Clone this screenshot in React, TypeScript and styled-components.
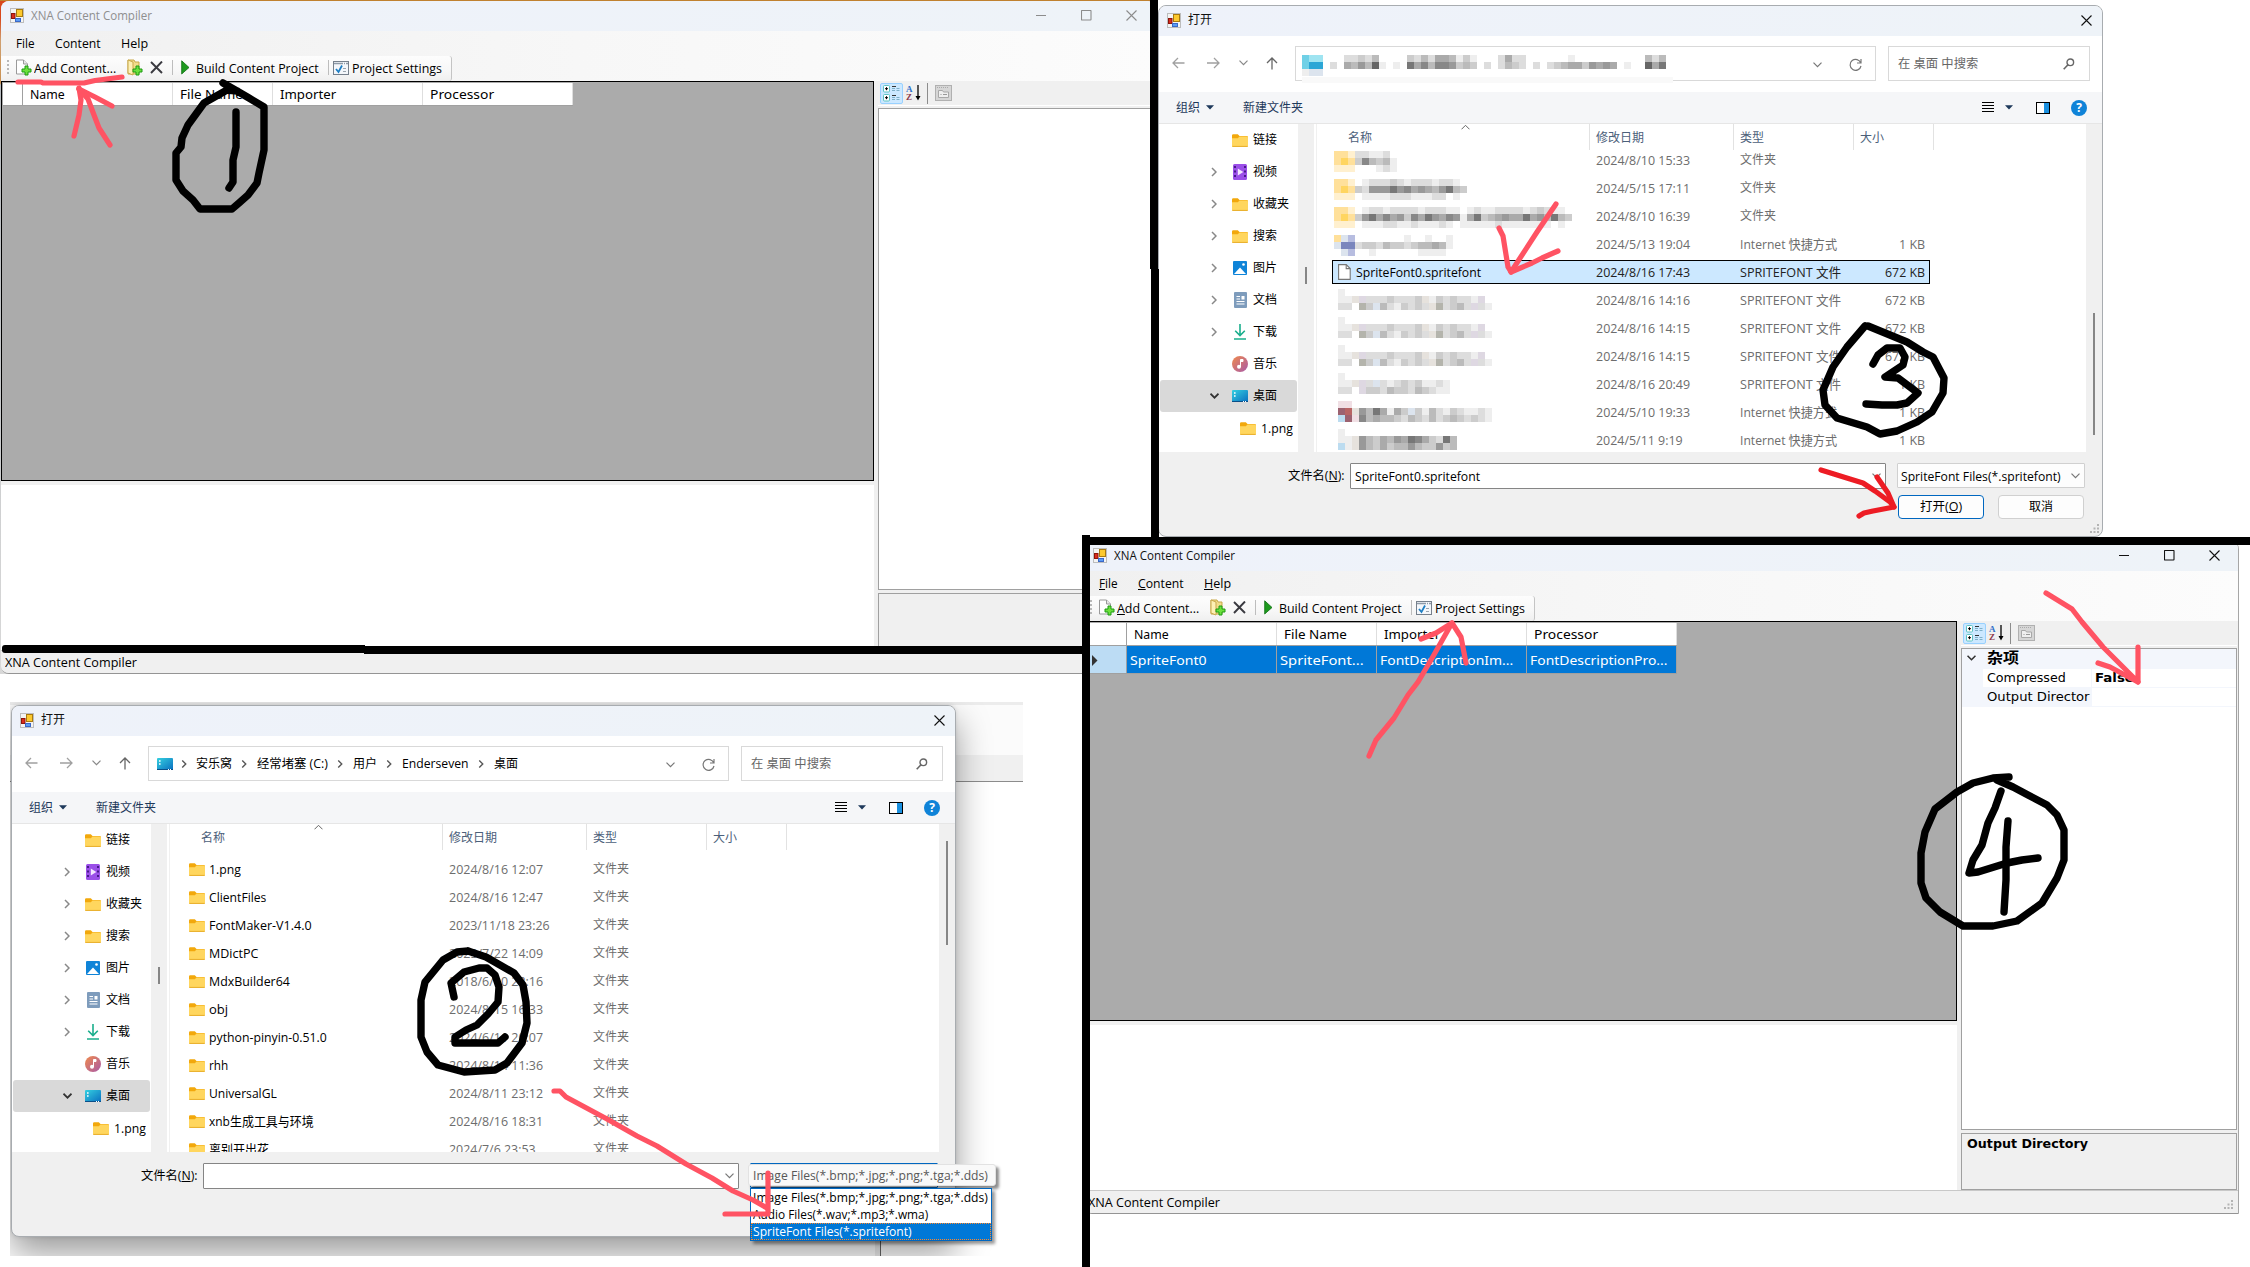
import React, { useLayoutEffect, useRef, useState } from "react";
import styled, { createGlobalStyle, css } from "styled-components";

const UI = `"Open Sans", "Noto Sans CJK SC", sans-serif`;
const GRID = `"Noto Sans", "Noto Sans CJK SC", sans-serif`;
const WIDE = `"DejaVu Sans", "Noto Sans CJK SC", sans-serif`;

const GlobalStyle = createGlobalStyle`
  body { margin: 0; background: #fff; font-family: ${UI}; font-size: 13px; line-height: 1; color: #000; }
  * { box-sizing: border-box; }
  svg { display: block; flex: none; }
`;

const Desktop = styled.div`
  position: relative;
  width: 2250px;
  height: 1267px;
  overflow: hidden;
  background: #fff;
`;

/* ---------- text ---------- */

const FitBox = styled.span<{ $w?: number; $size?: number; $color?: string; $bold?: boolean; $ml?: number; $font?: string }>`
  display: inline-block;
  flex: none;
  width: ${(p) => (p.$w ? `${p.$w}px` : "auto")};
  margin-left: ${(p) => p.$ml ?? 0}px;
  font-size: ${(p) => p.$size ?? 13}px;
  font-family: ${(p) => p.$font ?? "inherit"};
  font-weight: ${(p) => (p.$bold ? 700 : 400)};
  color: ${(p) => p.$color ?? "inherit"};
  line-height: 18px;
  white-space: nowrap;
`;
const FitInner = styled.span`
  display: inline-block;
  transform-origin: 0 50%;
  white-space: pre;
`;

type TextProps = { w?: number; size?: number; color?: string; bold?: boolean; ml?: number; font?: string; children: React.ReactNode };

function Text({ w, size, color, bold, ml, font, children }: TextProps) {
  const ref = useRef<HTMLSpanElement>(null);
  const [scale, setScale] = useState(1);
  useLayoutEffect(() => {
    if (w && ref.current) setScale(w / ref.current.offsetWidth);
  }, [w]);
  return (
    <FitBox $w={w} $size={size} $color={color} $bold={bold} $ml={ml} $font={font}>
      <FitInner ref={ref} style={{ transform: `scaleX(${scale})` }}>{children}</FitInner>
    </FitBox>
  );
}

const Key = ({ on = true, children }: { on?: boolean; children: React.ReactNode }) => (on ? <u>{children}</u> : <>{children}</>);

const Spot = styled.span<{ $ml?: number; $mt?: number }>`
  display: inline-flex;
  flex: none;
  margin-left: ${(p) => p.$ml ?? 0}px;
  margin-top: ${(p) => p.$mt ?? 0}px;
`;

/* ---------- icons ---------- */

const AppIcon = () => (
  <svg width="14" height="15" viewBox="0 0 14 15">
    <rect x=".5" y=".5" width="13" height="14" fill="#f4f4f4" stroke="#bdbdbd" />
    <rect x="6.5" y="1.5" width="6" height="7" fill="#fcc92f" stroke="#a87a10" />
    <rect x="1.5" y="5.5" width="3.5" height="5" fill="#d92b1c" stroke="#8c150c" />
    <rect x="5.5" y="10.5" width="5" height="3" fill="#5b9cf5" stroke="#3a68c8" />
  </svg>
);
const Plus = ({ x, y }: { x: number; y: number }) => (
  <path transform={`translate(${x} ${y})`} d="M3 0h3v3h3v3H6v3H3V6H0V3h3z" fill="#6be03c" stroke="#1c9a12" strokeWidth="1" />
);
const AddDocIcon = () => (
  <svg width="17" height="17" viewBox="0 0 17 17">
    <path d="M1.5 1h7l4 4v10h-11z" fill="#fff" stroke="#9a9a9a" />
    <path d="M8.500 1v4h4" fill="#e8e8e8" stroke="#9a9a9a" />
    <Plus x={7} y={7} />
  </svg>
);
const AddFolderIcon = () => (
  <svg width="16" height="17" viewBox="0 0 16 17">
    <path d="M1 1h6l1 2h4v12H1z" fill="#f2dc8a" stroke="#c8a84a" />
    <path d="M1 1l5 2v13l-5-2z" fill="#fdf0b4" stroke="#c8a84a" />
    <Plus x={6} y={7} />
  </svg>
);
const DeleteIcon = () => (
  <svg width="13" height="13" viewBox="0 0 13 13">
    <path d="M1 1l11 11M12 .5L1 12" stroke="#3a3a40" strokeWidth="1.900" fill="none" />
  </svg>
);
const PlayIcon = () => (
  <svg width="9" height="15" viewBox="0 0 9 15">
    <path d="M.7.8L8 7.500.7 14z" fill="#1e9a1e" stroke="#0c6e10" strokeWidth=".8" />
  </svg>
);
const SettingsIcon = () => (
  <svg width="16" height="14" viewBox="0 0 16 14">
    <rect x=".5" y=".5" width="15" height="13" fill="#f4f7fb" stroke="#76808c" />
    <path d="M1 2.500h14" stroke="#8e9aa8" strokeWidth="1.500" strokeDasharray="9 1 1 1" />
    <path d="M3 8l2.500 3L9 4.500" stroke="#1f7fc4" strokeWidth="1.800" fill="none" />
    <path d="M10 7.500h3M10 10.500h3" stroke="#9aa4ae" />
  </svg>
);
const CategoryIcon = () => (
  <svg width="18" height="17" viewBox="0 0 18 17">
    {[0.5, 9.5].map((y) => (
      <g key={y}>
        <rect x=".5" y={y} width="6" height="6.500" rx="1" fill="#fff" stroke="#5cc3c3" />
        <path d={`M2 ${y + 3.2}h3M3.500 ${y + 1.700}v3`} stroke="#000" />
        <path d={`M9 ${y + 1}h4`} stroke="#333" />
        <path d={`M9 ${y + 3}h3M13.500 ${y + 3}h3M9 ${y + 5}h3M13.500 ${y + 5}h3`} stroke="#7fb0c8" />
      </g>
    ))}
  </svg>
);
const SortIconBox = styled.span`
  display: flex;
  margin-left: 3px;
`;
const SortLetters = styled.span`
  display: flex;
  flex-direction: column;
  width: 8px;
  font: 700 9px/8px "Liberation Serif", serif;
  span:first-child { color: #2f6fc8; }
  span:last-child { color: #8c3a4a; }
`;
const SortIcon = () => (
  <SortIconBox>
    <SortLetters><span>A</span><span>Z</span></SortLetters>
    <svg width="7" height="16" viewBox="0 0 7 16">
      <path d="M4 0v12" stroke="#000" strokeWidth="1.300" />
      <path d="M1.500 11h5L4 15.500z" fill="#000" />
    </svg>
  </SortIconBox>
);
const PagesIcon = () => (
  <svg width="17" height="16" viewBox="0 0 17 16">
    <rect x=".5" y=".5" width="16" height="15" fill="#d6d6d6" stroke="#b0b0b0" />
    <path d="M2 2.500h12" stroke="#aaa" strokeDasharray="1 1" />
    <path d="M3.500 12.500v-7h4l1 1.500h5v5.500z" fill="#efefef" stroke="#a8a8a8" />
    <path d="M5.500 9.500h1M8 9.500h4" stroke="#999" />
  </svg>
);
const MinIcon = ({ c }: { c: string }) => (
  <svg width="11" height="11" viewBox="0 0 11 11"><path d="M0 5.500h10" stroke={c} /></svg>
);
const MaxIcon = ({ c }: { c: string }) => (
  <svg width="11" height="11" viewBox="0 0 11 11"><rect x=".5" y=".5" width="9.500" height="9.500" rx=".5" fill="none" stroke={c} strokeWidth="1.100" /></svg>
);
const CloseIcon = ({ c }: { c: string }) => (
  <svg width="11" height="11" viewBox="0 0 11 11"><path d="M.5.5l10 10M10.500.5l-10 10" stroke={c} strokeWidth="1.100" /></svg>
);
const BackIcon = () => (
  <svg width="13" height="12" viewBox="0 0 13 12"><path d="M12.500 6H1M6 1L1 6l5 5" fill="none" stroke="#a0a0a0" strokeWidth="1.300" /></svg>
);
const ForwardIcon = () => (
  <svg width="13" height="12" viewBox="0 0 13 12"><path d="M0 6h11.500M7 1l5 5-5 5" fill="none" stroke="#a0a0a0" strokeWidth="1.300" /></svg>
);
const UpIcon = () => (
  <svg width="12" height="13" viewBox="0 0 12 13"><path d="M6 12.500V1M1 6l5-5 5 5" fill="none" stroke="#666" strokeWidth="1.300" /></svg>
);
const Chevron = ({ c = "#888", w = 9, s = 1.2 }: { c?: string; w?: number; s?: number }) => (
  <svg width={w} height="6" viewBox="0 0 9 6"><path d="M.5.7l4 4 4-4" fill="none" stroke={c} strokeWidth={s} /></svg>
);
const ChevronRight = ({ c = "#888", h = 9, s = 1.5 }: { c?: string; h?: number; s?: number }) => (
  <svg width="6" height={h} viewBox="0 0 6 9"><path d="M1 .5l4 4-4 4" fill="none" stroke={c} strokeWidth={s} /></svg>
);
const RefreshIcon = () => (
  <svg width="13" height="14" viewBox="0 0 13 14"><path d="M11.800 5A5.500 5.500 0 1 0 12 8M12 1v4H8" fill="none" stroke="#777" strokeWidth="1.200" /></svg>
);
const SearchIcon = () => (
  <svg width="12" height="12" viewBox="0 0 12 12"><circle cx="7.300" cy="4.300" r="3.300" fill="none" stroke="#666" strokeWidth="1.400" /><path d="M5 6.800L.7 11.300" stroke="#666" strokeWidth="1.600" /></svg>
);
const DownTri = () => (
  <svg width="8" height="5" viewBox="0 0 8 5"><path d="M0 .3h8L4 4.600z" fill="#1e395b" /></svg>
);
const ListIcon = () => (
  <svg width="13" height="11" viewBox="0 0 13 11"><path d="M0 .5h12M0 3.500h12M0 6.500h12M0 9.500h12" stroke="#000" /></svg>
);
const PaneIcon = () => (
  <svg width="14" height="12" viewBox="0 0 14 12"><rect x=".5" y=".5" width="13" height="11" fill="#fff" stroke="#000" /><rect x="8" y="1" width="5" height="10" fill="#1a90e0" /></svg>
);
const HelpCircle = styled.span`
  display: flex;
  align-items: center;
  justify-content: center;
  width: 16px;
  height: 16px;
  margin-left: 21px;
  border-radius: 50%;
  background: #0f83d8;
  color: #fff;
  font: 700 12px/16px "Open Sans", sans-serif;
`;
const FolderIcon = () => (
  <svg width="16" height="13" viewBox="0 0 16 13">
    <path d="M0 1.500A1.300 1.300 0 0 1 1.300.2h4.500L7.500 2H14.700A1.300 1.300 0 0 1 16 3.300V6H0z" fill="#f2a80c" />
    <path d="M0 4.300h5.800L7.500 2.500h7.300A1.200 1.200 0 0 1 16 3.700v8A1.200 1.200 0 0 1 14.800 13H1.200A1.200 1.200 0 0 1 0 11.700z" fill="#ffd65e" />
    <path d="M.3 12.400h15.400" stroke="#e8ae2c" strokeWidth="1" />
  </svg>
);
const VideoIcon = () => (
  <svg width="14" height="16" viewBox="0 0 14 16">
    <rect width="14" height="16" rx="1.500" fill="#9b4fe8" />
    <path d="M2 2v12M12 2v12" stroke="#3e1580" strokeWidth="1.800" strokeDasharray="2 2.500" />
    <path d="M4.800 4.500l5.500 3.500-5.500 3.500z" fill="#f4e6ff" />
  </svg>
);
const PictureIcon = () => (
  <svg width="14" height="14" viewBox="0 0 14 14"><rect width="14" height="14" rx="1" fill="#0f84d8" /><path d="M1 13l6-6.500L13 13z" fill="#fff" /><circle cx="10.500" cy="3.500" r="1.300" fill="#fff" /></svg>
);
const DocIcon = () => (
  <svg width="13" height="16" viewBox="0 0 13 16"><rect width="13" height="16" rx="1" fill="#7e9cbc" /><path d="M2.500 4.500h3.500M2.500 7h3.500M2.500 9.500h8M2.500 12h8" stroke="#fff" strokeWidth="1.200" /><rect x="7.500" y="4" width="3" height="3.500" fill="#fff" /></svg>
);
const DownloadIcon = () => (
  <svg width="12" height="16" viewBox="0 0 12 16"><path d="M6 0v11M1.200 6.700L6 11.500l4.800-4.800M0 15h12" fill="none" stroke="#1aae8c" strokeWidth="1.600" /></svg>
);
const MusicIcon = () => (
  <svg width="16" height="16" viewBox="0 0 16 16">
    <defs><linearGradient id="mus" x1="0" y1="0" x2="1" y2="1"><stop offset="0" stopColor="#f08a4c" /><stop offset="1" stopColor="#a85aa8" /></linearGradient></defs>
    <circle cx="8" cy="8" r="8" fill="url(#mus)" /><circle cx="7" cy="10.800" r="2" fill="#fff" /><path d="M8.500 11V3.500h2.500v2H8.500" fill="#fff" stroke="#fff" strokeWidth="1" />
  </svg>
);
const DesktopIcon = () => (
  <svg width="16" height="12" viewBox="0 0 16 12">
    <defs><linearGradient id="desk" x1="0" y1="0" x2="1" y2="1"><stop offset="0" stopColor="#35d0e0" /><stop offset="1" stopColor="#0a6fc0" /></linearGradient></defs>
    <rect width="16" height="12" rx="1" fill="url(#desk)" /><path d="M2 3h1.600M2 6h1.600" stroke="#fff" strokeWidth="1.600" /><path d="M0 11.500h16" stroke="#0b4f88" /><path d="M11 11.500h4" stroke="#fff" strokeDasharray="1 1" />
  </svg>
);
const FileIcon = () => (
  <svg width="13" height="16" viewBox="0 0 13 16"><path d="M.6.600h7.600l4 4v10.800H.6z" fill="#fff" stroke="#777" strokeWidth="1.100" /><path d="M8.200.6v4h4" fill="none" stroke="#777" strokeWidth="1.100" /></svg>
);
const Grip = () => (
  <svg width="10" height="10" viewBox="0 0 10 10">
    {[[7, 0], [3.5, 3.5], [7, 3.5], [0, 7], [3.5, 7], [7, 7]].map(([x, y]) => <rect key={`${x}-${y}`} x={x} y={y} width="2" height="2" fill="#b4b4b4" />)}
  </svg>
);

/* ---------- pixelated names ---------- */

const TONES: Record<string, string> = {
  Y: "#ffe09a", Z: "#ffd560", y: "#fff0cf", P: "#7a86bd", p: "#b7bde0", C: "#9fe4f1", D: "#2ba6d6", E: "#6fd0e6",
  R: "#9c6270", S: "#b86464", s: "#f0dfe4", L: "#bcdcf0", l: "#dce4ee", w: "#e6e2dd", v: "#ded8e2", g: "#b4b4ac",
};
const MosaicGrid = styled.span<{ $cols: number; $mt?: number }>`
  display: grid;
  grid-template-columns: repeat(${(p) => p.$cols}, 7px);
  grid-auto-rows: 7px;
  margin-top: ${(p) => p.$mt ?? 0}px;
`;
const Cell = styled.i<{ $tone: string }>`
  background: ${(p) => p.$tone};
`;
const Mosaic = ({ rows, mt }: { rows: string[]; mt?: number }) => {
  const cols = Math.max(...rows.map((r) => r.length));
  return (
    <MosaicGrid $cols={cols} $mt={mt}>
      {rows.flatMap((r, y) =>
        r.padEnd(cols, ".").split("").map((ch, x) => (
          <Cell key={`${y}-${x}`} $tone={ch === "." ? "transparent" : TONES[ch] ?? `#${ch.repeat(6)}`} />
        ))
      )}
    </MosaicGrid>
  );
};

/* ---------- compiler window ---------- */

const Win = styled.section<{ $x: number; $y: number }>`
  position: absolute;
  left: ${(p) => p.$x}px;
  top: ${(p) => p.$y}px;
  width: 1155px;
  height: 673px;
  display: flex;
  flex-direction: column;
  overflow: hidden;
  background: #f0f0f0;
  border-right: 1px solid #a6a6a6;
  border-bottom: 1px solid #949494;
  border-radius: 8px 8px 0 8px;
`;
const TitleBar = styled.header<{ $color?: string }>`
  display: flex;
  align-items: center;
  flex: none;
  height: 30px;
  padding: 0 0 2px 8px;
  background: linear-gradient(90deg, #eef2fa, #eef3f8);
  color: ${(p) => p.$color ?? "#111"};
`;
const Controls = styled.div<{ $right: number }>`
  display: flex;
  gap: 34px;
  margin-left: auto;
  margin-right: ${(p) => p.$right}px;
`;
const Bars = styled.div`
  flex: none;
  background: linear-gradient(90deg, #f0f0f0, #f7f7f7 50%, #fcfcfc);
`;
const MenuBar = styled.nav`
  display: flex;
  align-items: center;
  height: 25px;
  padding: 0 0 1px 15px;
  gap: 20px;
`;
const ToolStrip = styled.div`
  display: flex;
  align-items: center;
  width: 451px;
  height: 25px;
  padding: 0 0 2px 6px;
  background: linear-gradient(#fdfdfd, #f7f7f7 60%, #efefef);
  border-right: 1px solid #c4c4c4;
  border-radius: 0 3px 3px 0;
`;
const Dots = styled.i`
  width: 2px;
  height: 16px;
  background: repeating-linear-gradient(#b8b8b8 0 2px, transparent 2px 4px);
`;
const Rule = styled.i<{ $ml: number; $h?: number; $c?: string }>`
  width: 1px;
  height: ${(p) => p.$h ?? 15}px;
  margin-left: ${(p) => p.$ml}px;
  background: ${(p) => p.$c ?? "#bdbdbd"};
`;
const Body = styled.main`
  display: grid;
  grid-template-columns: 873px 276px;
  column-gap: 4px;
  height: 569px;
`;
const LeftPane = styled.div`
  display: grid;
  grid-template-rows: 400px 1fr;
  row-gap: 4px;
`;
const DataGrid = styled.div`
  background: #ababab;
  border: 1px solid #000;
  padding: 1px 0 0 1px;
`;
const HeaderRow = styled.div<{ $lead: number }>`
  display: grid;
  grid-template-columns: ${(p) => p.$lead}px 150px 100px 150px 150px;
  width: max-content;
  height: 23px;
  background: #fff;
  border-bottom: 1px solid #a0a0a0;
`;
const HeadCell = styled.div<{ $lead?: boolean }>`
  display: flex;
  align-items: center;
  padding-left: 7px;
  border-right: 1px solid ${(p) => (p.$lead ? "#a0a0a0" : "#dedede")};
`;
const DataRow = styled(HeaderRow)`
  height: 28px;
  background: #0078d7;
  color: #fff;
`;
const DataCell = styled.div<{ $lead?: boolean }>`
  display: flex;
  align-items: center;
  padding: 1px 0 0 ${(p) => (p.$lead ? 6 : 3)}px;
  background: ${(p) => (p.$lead ? "#bcdcf4" : "transparent")};
  border-right: 1px solid #a0a0a0;
`;
const Output = styled.div`
  background: #fff;
`;
const PropPane = styled.aside`
  display: grid;
  grid-template-rows: 25px 482px 58px;
  row-gap: 2px;
`;
const PropTools = styled.div`
  display: flex;
  align-items: center;
  border-bottom: 1px solid #fff;
  padding-left: 2px;
`;
const ActiveTool = styled.span`
  display: flex;
  align-items: center;
  justify-content: center;
  width: 23px;
  height: 21px;
  background: #cce8ff;
  border: 1px solid #99d1ff;
  border-radius: 2px;
`;
const PropGrid = styled.div`
  background: #fff;
  border: 1px solid #a0a0a0;
  font-family: ${WIDE};
`;
const PropHead = styled.div`
  display: flex;
  align-items: center;
  height: 20px;
  padding: 0 0 3px 5px;
  background: #f3f6fc;
`;
const PropRow = styled.div`
  display: grid;
  grid-template-columns: 21px 108px 1fr;
  height: 19px;
  background: #f3f6fc;
`;
const PropName = styled.div<{ $plain?: boolean }>`
  display: flex;
  align-items: center;
  padding-left: 4px;
  background: ${(p) => (p.$plain ? "#fff" : "#f3f6fc")};
  border-bottom: 1px solid #f3f6fc;
`;
const PropValue = styled.div`
  display: flex;
  align-items: center;
  padding-left: 3px;
  background: #fff;
  border-left: 1px solid #f3f6fc;
  border-bottom: 1px solid #f3f6fc;
`;
const PropHelp = styled.div`
  padding: 1px 0 0 5px;
  margin-top: 1px;
  border: 1px solid #a0a0a0;
  font-family: ${WIDE};
`;
const StatusBar = styled.footer`
  display: flex;
  align-items: center;
  justify-content: space-between;
  flex: 1;
  padding: 0 4px 0;
  border-top: 1px solid #c8c8c8;
  background: #f0f0f0;
`;

type XnaProps = { x: number; y: number; active: boolean; row?: { w: number; t: string }[] };

const HEADS = [{ t: "Name", w: 35 }, { t: "File Name", w: 63 }, { t: "Importer", w: 56 }, { t: "Processor", w: 64 }];

function XnaWindow({ x, y, active, row }: XnaProps) {
  const c = active ? "#111" : "#8c8c8c";
  const lead = row ? 41 : 20;
  return (
    <Win $x={x} $y={y}>
      <TitleBar $color={active ? "#111" : "#8f8f8f"}>
        <Spot $ml={1}><AppIcon /></Spot>
        <Text w={121} ml={7}>XNA Content Compiler</Text>
        <Controls $right={18}><MinIcon c={c} /><MaxIcon c={c} /><CloseIcon c={c} /></Controls>
      </TitleBar>
      <Bars>
        <MenuBar>
          <Text w={19}><Key on={active}>F</Key>ile</Text>
          <Text w={46}><Key on={active}>C</Key>ontent</Text>
          <Text w={27}><Key on={active}>H</Key>elp</Text>
        </MenuBar>
        <ToolStrip>
          <Dots />
          <Spot $ml={6}><AddDocIcon /></Spot>
          <Text w={82} ml={2}><Key on={active}>A</Key>dd Content...</Text>
          <Spot $ml={11}><AddFolderIcon /></Spot>
          <Spot $ml={7}><DeleteIcon /></Spot>
          <Rule $ml={9} />
          <Spot $ml={8}><PlayIcon /></Spot>
          <Text w={123} ml={6}>Build Content Project</Text>
          <Rule $ml={9} />
          <Spot $ml={4}><SettingsIcon /></Spot>
          <Text w={90} ml={3}>Project Settings</Text>
        </ToolStrip>
      </Bars>
      <Body>
        <LeftPane>
          <DataGrid>
            <HeaderRow $lead={lead}>
              <HeadCell $lead />
              {HEADS.map((h) => <HeadCell key={h.t}><Text w={h.w} font={GRID}>{h.t}</Text></HeadCell>)}
            </HeaderRow>
            {row && (
              <DataRow $lead={lead}>
                <DataCell $lead><svg width="6" height="11" viewBox="0 0 6 11"><path d="M0 0l5.500 5.500L0 11z" fill="#333" /></svg></DataCell>
                {row.map((r) => <DataCell key={r.t}><Text w={r.w} font={GRID}>{r.t}</Text></DataCell>)}
              </DataRow>
            )}
          </DataGrid>
          <Output />
        </LeftPane>
        <PropPane>
          <PropTools>
            <ActiveTool><CategoryIcon /></ActiveTool>
            <SortIcon />
            <Rule $ml={6} $h={21} $c="#8c8c8c" />
            <Spot $ml={7}><PagesIcon /></Spot>
          </PropTools>
          <PropGrid>
            {row && (
              <>
                <PropHead><Chevron c="#333" s={1.6} /><Text size={14.5} bold ml={11} w={32}>杂项</Text></PropHead>
                <PropRow><i /><PropName $plain><Text w={79}>Compressed</Text></PropName><PropValue><Text w={39} bold>False</Text></PropValue></PropRow>
                <PropRow><i /><PropName><Text w={103}>Output Director</Text></PropName><PropValue /></PropRow>
              </>
            )}
          </PropGrid>
          <PropHelp>{row && <Text w={121} bold>Output Directory</Text>}</PropHelp>
        </PropPane>
      </Body>
      <StatusBar><Text w={132}>XNA Content Compiler</Text><Spot $mt={6}><Grip /></Spot></StatusBar>
    </Win>
  );
}

/* ---------- file dialog ---------- */

const Dialog = styled.section<{ $x: number; $y: number; $shadow?: boolean }>`
  position: absolute;
  left: ${(p) => p.$x}px;
  top: ${(p) => p.$y}px;
  width: 945px;
  height: 532px;
  display: flex;
  flex-direction: column;
  overflow: hidden;
  background: #f0f0f0;
  border: 1px solid #a8acb0;
  border-radius: 8px;
  ${(p) => p.$shadow && css`box-shadow: 0 16px 34px rgba(0, 0, 0, 0.4), 0 0 4px rgba(0, 0, 0, 0.12);`}
`;
const NavRow = styled.div`
  display: flex;
  align-items: flex-start;
  flex: none;
  height: 56px;
  padding: 10px 0 0 14px;
  background: #fff;
`;
const NavGlyphs = styled.div`
  display: grid;
  grid-template-columns: 35px 32px 27px 28px;
  align-items: center;
  height: 34px;
  margin-left: -1px;
  margin-right: 1px;
`;
const Field = styled.div<{ $w: number; $ml?: number }>`
  position: relative;
  display: flex;
  align-items: center;
  width: ${(p) => p.$w}px;
  height: 35px;
  margin-left: ${(p) => p.$ml ?? 0}px;
  border: 1px solid #d9d9d9;
  background: #fff;
`;
const Crumbs = styled.div`
  display: flex;
  align-items: center;
  width: 510px;
  padding-left: 8px;
`;
const Censor = styled.div`
  position: absolute;
  left: 6px;
  top: 8px;
  padding-bottom: 7px;
  background: linear-gradient(transparent 22px, #f9f9f9 22px);
`;
const CommandBar = styled.div`
  display: flex;
  align-items: center;
  flex: none;
  height: 32px;
  padding: 0 15px 0 17px;
  background: #f5f6f8;
  border-bottom: 1px solid #e6e6e6;
  color: #1e395b;
`;
const CommandRight = styled.div`
  display: flex;
  align-items: center;
  margin-left: auto;
`;
const Browse = styled.div`
  display: grid;
  grid-template-columns: 139px 16px 2px 1fr 16px;
  flex: none;
  height: 328px;
  background: #fff;
`;
const Side = styled.div`
  display: flex;
  flex-direction: column;
  overflow: hidden;
`;
const SideRow = styled.div<{ $on?: boolean; $child?: boolean }>`
  display: grid;
  grid-template-columns: ${(p) => (p.$child ? "80px 21px 1fr" : "72px 21px 1fr")};
  align-items: center;
  flex: none;
  height: 32px;
  margin: 0 1px;
  border-radius: 3px;
  background: ${(p) => (p.$on ? "#d9d9d9" : "transparent")};
`;
const Arrow = styled.span<{ $open?: boolean }>`
  padding-left: ${(p) => (p.$open ? 50 : 51)}px;
`;
const IconSlot = styled.span`
  display: flex;
  justify-content: center;
  width: 16px;
`;
const Track = styled.div`
  background: #f0f0f0;
`;
const Thumb = styled.i<{ $top: number; $h: number }>`
  display: block;
  width: 2px;
  height: ${(p) => p.$h}px;
  margin: ${(p) => p.$top}px 0 0 7px;
  background: #868686;
`;
const Files = styled.div`
  display: flex;
  flex-direction: column;
  overflow: hidden;
  border-left: 1px solid #f0f0f0;
`;
const ColumnHeads = styled.div`
  position: relative;
  display: grid;
  grid-template-columns: 272px 144px 120px 80px 1fr;
  flex: none;
  height: 26px;
  color: #4c607a;
`;
const ColHead = styled.div<{ $first?: boolean }>`
  display: flex;
  align-items: center;
  padding: 2px 0 0 ${(p) => (p.$first ? 31 : 6)}px;
  border-left: ${(p) => (p.$first ? 0 : 1)}px solid #e2e2e2;
`;
const SortMark = styled.span`
  position: absolute;
  left: 144px;
  top: 0;
  transform: rotate(180deg);
`;
const FileList = styled.div<{ $shift: number }>`
  margin-top: ${(p) => p.$shift}px;
`;
const FileRow = styled.div<{ $on?: boolean }>`
  display: grid;
  grid-template-columns: 272px 144px 120px 72px;
  align-items: center;
  height: 28px;
  color: #6d6d6d;
  ${(p) =>
    p.$on &&
    css`
      grid-template-columns: 256px 144px 120px 72px;
      width: 598px;
      height: 24px;
      margin: 2px 0 2px 15px;
      background: #cce8ff;
      border: 1px solid #000;
      color: #222;
    `}
`;
const NameCell = styled.div<{ $pad: number }>`
  display: flex;
  align-items: center;
  padding-left: ${(p) => p.$pad}px;
  color: #000;
`;
const DateCell = styled.div`
  padding-left: 7px;
`;
const SizeCell = styled.div`
  display: flex;
  justify-content: flex-end;
`;
const Footer = styled.div`
  display: grid;
  grid-template-columns: 57px 535px 188px;
  column-gap: 12px;
  align-items: start;
  padding: 11px 0 0 129px;
  height: 84px;
`;
const NameLabel = styled.label`
  padding-top: 4px;
`;
const NameInput = styled.div`
  display: flex;
  align-items: center;
  justify-content: space-between;
  width: 536px;
  height: 26px;
  margin-left: -7px;
  padding: 0 4px;
  background: #fff;
  border: 1px solid #858585;
  border-radius: 1px;
`;
const Choices = styled.div`
  display: grid;
  grid-template-columns: 87px 87px;
  column-gap: 13px;
  row-gap: 7px;
  margin-left: -7px;
`;
const TypeBox = styled.div<{ $open?: boolean }>`
  grid-column: 1 / 3;
  display: flex;
  align-items: center;
  justify-content: space-between;
  width: 188px;
  height: 25px;
  padding: 0 4px 0 3px;
  background: #fdfdfd;
  border: 1px solid ${(p) => (p.$open ? "#0067c0" : "#d0d0d0")};
  border-radius: 1px;
`;
const Button = styled.div<{ $main?: boolean }>`
  display: flex;
  align-items: center;
  justify-content: center;
  height: 24px;
  margin-left: 1px;
  background: #fdfdfd;
  border: ${(p) => (p.$main ? "1px solid #0067c0" : "1px solid #d0d0d0")};
  border-radius: 4px;
`;
const Corner = styled.div`
  position: absolute;
  right: 2px;
  bottom: 2px;
`;

const SIDE = [
  { t: "链接", w: 24, icon: <FolderIcon />, arrow: false },
  { t: "视频", w: 24, icon: <VideoIcon />, arrow: true },
  { t: "收藏夹", w: 36, icon: <FolderIcon />, arrow: true },
  { t: "搜索", w: 24, icon: <FolderIcon />, arrow: true },
  { t: "图片", w: 24, icon: <PictureIcon />, arrow: true },
  { t: "文档", w: 24, icon: <DocIcon />, arrow: true },
  { t: "下载", w: 24, icon: <DownloadIcon />, arrow: true },
  { t: "音乐", w: 24, icon: <MusicIcon />, arrow: false },
];

type FileItem = { name?: string; w?: number; mosaic?: string[]; pad?: number; lift?: number; date: string; dw: number; type: string; tw: number; size?: string; sw?: number; on?: boolean };
type DialogProps = { x: number; y: number; shadow?: boolean; shift: number; crumbs?: { t: string; w: number }[]; censored?: string[]; files: FileItem[]; thumb: [number, number]; value?: string; typeOpen?: boolean };

function FileDialog({ x, y, shadow, shift, crumbs, censored, files, thumb, value, typeOpen }: DialogProps) {
  return (
    <Dialog $x={x} $y={y} $shadow={shadow}>
      <TitleBar>
        <AppIcon />
        <Text size={12} ml={7}>打开</Text>
        <Controls $right={10}><CloseIcon c="#111" /></Controls>
      </TitleBar>
      <NavRow>
        <NavGlyphs><BackIcon /><ForwardIcon /><Chevron /><UpIcon /></NavGlyphs>
        <Field $w={581}>
          <Crumbs>
            {crumbs && <DesktopIcon />}
            {crumbs?.map((c, i) => (
              <React.Fragment key={c.t}>
                <Spot $ml={i ? 9 : 8}><ChevronRight c="#555" h={8} /></Spot>
                <Text size={12} w={c.w} ml={i ? 10 : 9}>{c.t}</Text>
              </React.Fragment>
            ))}
          </Crumbs>
          {censored && <Censor><Mosaic rows={censored} /></Censor>}
          <Spot $ml={7} $mt={2}><Chevron c="#777" /></Spot>
          <Spot $ml={27} $mt={2}><RefreshIcon /></Spot>
        </Field>
        <Field $w={202} $ml={12}>
          <Text size={12} w={80} ml={9} color="#666">在 桌面 中搜索</Text>
          <Spot $ml={85}><SearchIcon /></Spot>
        </Field>
      </NavRow>
      <CommandBar>
        <Text size={12}>组织</Text>
        <Spot $ml={6}><DownTri /></Spot>
        <Text size={12} ml={29}>新建文件夹</Text>
        <CommandRight>
          <ListIcon />
          <Spot $ml={10}><DownTri /></Spot>
          <Spot $ml={23}><PaneIcon /></Spot>
          <HelpCircle>?</HelpCircle>
        </CommandRight>
      </CommandBar>
      <Browse>
        <Side>
          {SIDE.map((s) => (
            <SideRow key={s.t}>
              <Arrow>{s.arrow && <ChevronRight h={10} />}</Arrow>
              <IconSlot>{s.icon}</IconSlot>
              <Text size={12} w={s.w}>{s.t}</Text>
            </SideRow>
          ))}
          <SideRow $on><Arrow $open><Chevron c="#333" s={1.7} /></Arrow><IconSlot><DesktopIcon /></IconSlot><Text size={12}>桌面</Text></SideRow>
          <SideRow $child><i /><FolderIcon /><Text w={32}>1.png</Text></SideRow>
        </Side>
        <Track><Thumb $top={143} $h={17} /></Track>
        <i />
        <Files>
          <ColumnHeads>
            <ColHead $first><Text size={12}>名称</Text></ColHead>
            <ColHead><Text size={12}>修改日期</Text></ColHead>
            <ColHead><Text size={12}>类型</Text></ColHead>
            <ColHead><Text size={12}>大小</Text></ColHead>
            <ColHead />
            <SortMark><Chevron c="#666" s={1} /></SortMark>
          </ColumnHeads>
          <FileList $shift={shift}>
            {files.map((f, i) => (
              <FileRow key={i} $on={f.on}>
                <NameCell $pad={f.mosaic ? f.pad ?? 17 : f.on ? 5 : 19}>
                  {f.mosaic ? <Mosaic rows={f.mosaic} mt={f.lift ?? 2} /> : f.on ? <FileIcon /> : <FolderIcon />}
                  {f.name && <Text w={f.w} ml={f.on ? 5 : 4}>{f.name}</Text>}
                </NameCell>
                <DateCell><Text w={f.dw}>{f.date}</Text></DateCell>
                <DateCell><Text w={f.tw} size={f.tw === 36 ? 12 : 13}>{f.type}</Text></DateCell>
                <SizeCell>{f.size && <Text w={f.sw}>{f.size}</Text>}</SizeCell>
              </FileRow>
            ))}
          </FileList>
        </Files>
        <Track><Thumb $top={thumb[0]} $h={thumb[1]} /></Track>
      </Browse>
      <Footer>
        <NameLabel><Text size={12.5} w={57}>文件名(<u>N</u>):</Text></NameLabel>
        <NameInput>{value ? <Text w={125}>{value}</Text> : <i />}<Chevron c="#777" /></NameInput>
        <Choices>
          {typeOpen ? (
            <TypeBox $open />
          ) : (
            <>
              <TypeBox><Text w={160}>SpriteFont Files(*.spritefont)</Text><Chevron c="#777" /></TypeBox>
              <Button $main><Text size={12.5} w={42}>打开(<u>O</u>)</Text></Button>
              <Button><Text size={12}>取消</Text></Button>
            </>
          )}
        </Choices>
      </Footer>
      <Corner><Grip /></Corner>
    </Dialog>
  );
}

const folder = (name: string, w: number, date: string, dw = 94): FileItem => ({ name, w, date, dw, type: "文件夹", tw: 36 });
const FILES_A: FileItem[] = [
  folder("1.png", 32, "2024/8/16 12:07"),
  folder("ClientFiles", 57, "2024/8/16 12:47"),
  folder("FontMaker-V1.4.0", 103, "2023/11/18 23:26", 101),
  folder("MDictPC", 49, "2023/7/22 14:09"),
  folder("MdxBuilder64", 81, "2018/6/10 22:16"),
  folder("obj", 19, "2024/8/15 16:33"),
  folder("python-pinyin-0.51.0", 118, "2024/6/11 20:07"),
  folder("rhh", 19, "2024/8/14 11:36"),
  folder("UniversalGL", 68, "2024/8/11 23:12"),
  folder("xnb生成工具与环境", 105, "2024/8/16 18:31"),
  folder("离别开出花", 60, "2024/7/6 23:53", 87),
];
const FONT_MOSAIC = [".ef", ".eewvdddcdddcwecdcddev", ".ddfgclbdecdcdwgdcbdvde"];
const LOW = { pad: 14, lift: -1 };
const sprite = (mosaic: string[], date: string, size = "672 KB", sw = 40): FileItem => ({ mosaic, date, dw: 94, type: "SPRITEFONT 文件", tw: 101, size, sw, ...LOW });
const link = (mosaic: string[], date: string, dw = 94): FileItem => ({ mosaic, date, dw, type: "Internet 快捷方式", tw: 97, size: "1 KB", sw: 26 });
const FILES_B: FileItem[] = [
  { mosaic: ["YYyddeedf", "YZYc8bcbe", "yyy...ede"], date: "2024/8/10 15:33", dw: 94, type: "文件夹", tw: 36 },
  { mosaic: ["YYyfedddcdedddedde", "YZYcd999798a9ab97bc", "yyyfeeeedddeeeddfef"], date: "2024/5/15 17:11", dw: 94, type: "文件夹", tw: 36 },
  { mosaic: ["YYyfeddeddddedddee.edeeddddedcdee", "YZYc97a8a9c8a79a89ea7cba9aa7a9b7bc", "yyyfeeeddeedeeedefeeeeedeeeeeeefef"], date: "2024/8/10 16:39", dw: 94, type: "文件夹", tw: 36 },
  link(["Ylpf......effef.e", "lPPdccdbccdcbbabe", ".lpf.effffffeeeef"], "2024/5/13 19:04"),
  { name: "SpriteFont0.spritefont", w: 125, date: "2024/8/16 17:43", dw: 94, type: "SPRITEFONT 文件", tw: 101, size: "672 KB", sw: 40, on: true },
  sprite(FONT_MOSAIC, "2024/8/16 14:16"),
  sprite(FONT_MOSAIC, "2024/8/16 14:15"),
  sprite(FONT_MOSAIC, "2024/8/16 14:15"),
  sprite([".ef", ".eewvdldedcdceede", ".ddfvccdbccdbcdee"], "2024/8/16 20:49", "1 KB", 26),
  { ...link([".ss", ".RSw9b7aeaclcebdecdeede", ".LRs8babbcdbcdbdcbcdcde"], "2024/5/10 19:33"), ...LOW },
  { ...link([".ef", ".eew9bcab9a78acd7b", ".Lew9bcacbb9bcc9cb"], "2024/5/11 9:19", 87), ...LOW },
];
const CENSORED = [
  "ECC...ddcdbf...cdbdaabece...dadd...f..e..........bdb.",
  "EDD.d.ab9b6efef7a8b889cbc.d.dbcd.d.dcbaac9a9a.e..6a7.",
  "ell...................ff...",
];
const CRUMBS = [{ t: "安乐窝", w: 36 }, { t: "经常堵塞 (C:)", w: 71 }, { t: "用户", w: 24 }, { t: "Enderseven", w: 67 }, { t: "桌面", w: 24 }];

/* ---------- pieces around the windows ---------- */

const Wallpaper = styled.div`
  position: absolute;
  left: 0;
  top: 0;
  width: 1150px;
  height: 674px;
  background: linear-gradient(#d8481c 0 17px, #d0a070 40px, #c99050 82px, #b8bcc0 84px, #d8d8d8);
  border-top: 1px solid #c0812f;
`;
const Backdrop = styled.div`
  position: absolute;
  left: 10px;
  top: 702px;
  width: 1013px;
  height: 554px;
  overflow: hidden;
`;
const Behind = styled.div`
  display: flex;
  flex-direction: column;
  height: 100%;
`;
const Band = styled.div<{ $h: number; $c: string; $line?: boolean }>`
  flex: none;
  height: ${(p) => p.$h}px;
  background: ${(p) => p.$c};
  border-bottom: ${(p) => (p.$line ? "1px solid #8c8c8c" : "0")};
`;
const Divide = styled.i`
  width: 6px;
  flex: 1;
  margin-left: 865px;
  border-right: 1px solid #666;
  background: #eee;
`;
const Tip = styled.div`
  position: absolute;
  left: 748px;
  top: 1164px;
  width: 248px;
  height: 22px;
  padding: 1px 0 0 4px;
  background: #f9f9f9;
  border: 1px solid #e2e2e2;
  border-radius: 3px;
  box-shadow: 3px 3px 3px rgba(0, 0, 0, 0.45);
`;
const DropList = styled.div`
  position: absolute;
  left: 750px;
  top: 1188px;
  width: 242px;
  height: 53px;
  background: #fff;
  border: 1px solid #0067c0;
  box-shadow: 3px 3px 3px rgba(0, 0, 0, 0.4);
`;
const Option = styled.div<{ $on?: boolean }>`
  display: flex;
  align-items: center;
  height: 17px;
  padding: 0 0 1px 2px;
  background: ${(p) => (p.$on ? "#0078d7" : "#fff")};
  color: ${(p) => (p.$on ? "#fff" : "#000")};
  outline: ${(p) => (p.$on ? "1px dotted #ff8728" : "none")};
  outline-offset: -1px;
  span { line-height: 16px; }
`;
const Ink = styled.svg`
  position: absolute;
  left: 0;
  top: 0;
  fill: none;
  stroke-linecap: round;
  stroke-linejoin: round;
`;

const BLACK = [
  "223,83 237,91 249,98 264,107 264,150 259,173 257,183 248,195 239,203 232,209 200,209 193,200 183,191 176,180 176,153 181,147 182,138 188,125 204,103 227,90 237,91",
  "236,112 236,147 233,160 233,182 229,188",
  "468,951 457,952 443,960 425,982 421,1000 421,1037 427,1052 438,1065 464,1072 495,1070 507,1063 522,1043 527,1023 526,1002 523,985 514,973 486,957 468,951",
  "454,997 451,983 464,972 479,968 487,968 495,975 499,987 498,1002 488,1014 477,1025 466,1030 455,1037 455,1043 498,1043 505,1037",
  "1868,326 1907,342 1923,352 1933,357 1944,378 1943,393 1932,412 1917,422 1897,431 1880,434 1867,427 1837,418 1825,405 1823,390 1833,367 1847,347 1865,326",
  "1873,364 1878,355 1887,348 1900,348 1905,357 1903,365 1885,377 1898,378 1918,393 1907,403 1897,405 1882,405 1866,404",
  "2009,777 1993,778 1973,783 1957,792 1935,809 1925,832 1921,853 1921,883 1926,898 1940,912 1963,926 1993,926 2017,921 2042,903 2057,878 2064,860 2064,830 2057,815 2047,805 2028,795 2013,787 1997,780",
  "2001,791 1995,808 1988,823 1982,845 1973,860 1969,873 1978,872 2007,863 2022,860 2038,858",
  "2008,821 2006,847 2006,880 2004,912",
];
const PINK = [
  "18,82 41,82 43,83 84,83 95,80.5 122,77",
  "79,88 81,100 79,115 74,136",
  "79,89 88,99 94,115 99,128 110,145",
  "79,89 95,97 112,106",
  "1556,204 1537,232 1511,272 1508,267 1503,236 1499,228",
  "1511,272 1532,263 1542,258 1558,251",
  "554,1091 560,1091 566,1097 607,1119 637,1136 657,1146 686,1164 712,1178 733,1191 753,1200 767,1208",
  "768,1173 768,1214 725,1214",
  "1369,756 1376,740 1394,718 1408,695 1418,682 1431,660 1452,623 1461,637 1466,663",
  "1421,639 1436,633 1452,623",
  "2046,593 2072,609 2082,622 2103,647 2138,682 2138,647",
  "2098,663 2110,667 2138,682",
];
const RED = ["1821,470 1850,479 1863,483 1875,491 1890,502 1894,507", "1877,477 1888,493 1894,507 1873,511 1864,513 1859,516"];

const Annotations = () => (
  <Ink width="2250" height="1267" viewBox="0 0 2250 1267">
    <g fill="#000">
      <rect x="2" y="645" width="363" height="8" rx="3" />
      <rect x="350" y="645" width="15" height="8" />
      <rect x="364" y="646" width="724" height="8" />
      <rect x="1150" y="0" width="8" height="269" />
      <rect x="1151" y="269" width="8" height="272" />
      <rect x="1082" y="537" width="1168" height="8" />
      <rect x="1082" y="535" width="8" height="732" />
    </g>
    {BLACK.map((p) => <polyline key={p} points={p} stroke="#000" strokeWidth="7.400" />)}
    {PINK.map((p) => <polyline key={p} points={p} stroke="#ff5363" strokeWidth="5.200" />)}
    {RED.map((p) => <polyline key={p} points={p} stroke="#ed1c24" strokeWidth="5.200" />)}
  </Ink>
);

export default function App() {
  return (
    <Desktop>
      <GlobalStyle />
      <Wallpaper />
      <XnaWindow x={1} y={1} active={false} />
      <Backdrop>
        <Behind>
          <Band $h={3} $c="#ececec" />
          <Band $h={50} $c="#fbfbfb" />
          <Band $h={27} $c="#f0f0f0" $line />
          <Divide />
        </Behind>
        <FileDialog x={1} y={3} shadow shift={5} crumbs={CRUMBS} files={FILES_A} thumb={[17, 104]} typeOpen />
      </Backdrop>
      <Tip><Text w={235} color="#575757">Image Files(*.bmp;*.jpg;*.png;*.tga;*.dds)</Text></Tip>
      <DropList>
        <Option><Text w={235}>Image Files(*.bmp;*.jpg;*.png;*.tga;*.dds)</Text></Option>
        <Option><Text w={175}>Audio Files(*.wav;*.mp3;*.wma)</Text></Option>
        <Option $on><Text w={159}>SpriteFont Files(*.spritefont)</Text></Option>
      </DropList>
      <XnaWindow
        x={1084}
        y={541}
        active
        row={[{ t: "SpriteFont0", w: 77 }, { t: "SpriteFont...", w: 84 }, { t: "FontDescriptionIm...", w: 133 }, { t: "FontDescriptionPro...", w: 138 }]}
      />
      <FileDialog x={1158} y={5} shift={-4} censored={CENSORED} files={FILES_B} thumb={[189, 122]} value="SpriteFont0.spritefont" />
      <Annotations />
    </Desktop>
  );
}
